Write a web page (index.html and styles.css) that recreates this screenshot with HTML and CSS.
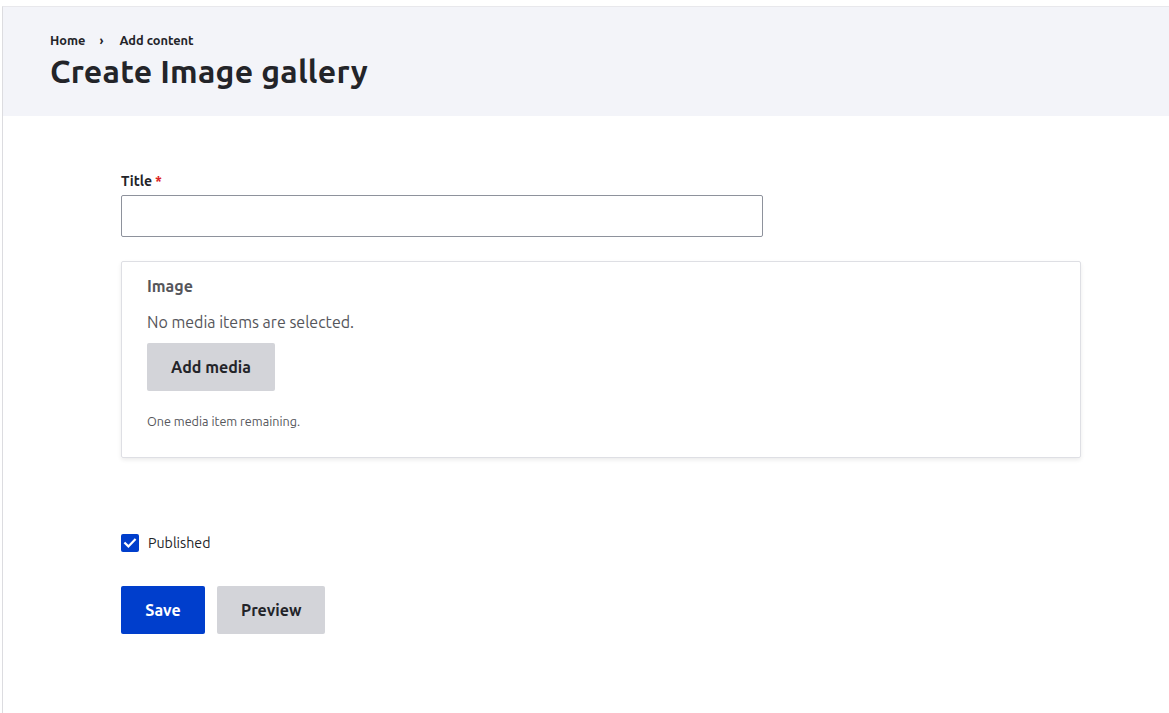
FILE: index.html
```html
<!DOCTYPE html>
<html lang="en">
<head>
<meta charset="utf-8">
<title>Create Image gallery</title>
<link rel="stylesheet" href="styles.css">
</head>
<body>
<div class="frame">
  <header class="page-header">
    <nav class="breadcrumb">
      <a href="#">Home</a>
      <span class="sep">›</span>
      <a href="#">Add content</a>
    </nav>
    <h1>Create Image gallery</h1>
  </header>
  <main class="content">
    <div class="field">
      <label class="label" for="title">Title<span class="req">*</span></label>
      <input id="title" class="text-input" type="text">
    </div>
    <fieldset class="media-box">
      <legend class="legend">Image</legend>
      <p class="empty">No media items are selected.</p>
      <button class="btn btn-grey btn-add" type="button">Add media</button>
      <p class="desc">One media item remaining.</p>
    </fieldset>
    <label class="check">
      <span class="box"><svg viewBox="0 0 18 18" width="18" height="18"><path d="M4.2 9.3 7.4 12.4 13.8 5.8" fill="none" stroke="#fff" stroke-width="2.2" stroke-linecap="square"/></svg></span>
      <span>Published</span>
    </label>
    <div class="actions">
      <button class="btn btn-blue" type="button">Save</button>
      <button class="btn btn-grey" type="button">Preview</button>
    </div>
  </main>
</div>
</body>
</html>
```
FILE: styles.css
```css
* { box-sizing: border-box; }
html, body { margin: 0; padding: 0; background: #fff; }
body {
  font-family: "Ubuntu", "Noto Sans", "Open Sans", sans-serif;
  color: #232429;
}
.frame {
  margin: 6px 0 0 2px;
  border-top: 1px solid #e8e8ec;
  border-left: 1px solid #dcdce0;
  min-height: 707px;
}
.page-header {
  background: #f3f4f9;
  height: 109px;
  padding: 24px 0 0 47px;
}
.breadcrumb {
  display: flex;
  align-items: center;
  font-size: 12.8px;
  font-weight: 700;
  line-height: 18px;
  height: 18px;
  padding-top: 0;
}
.breadcrumb a { color: #232429; text-decoration: none; }
.breadcrumb .sep { margin: 0 16px 0 14px; font-weight: 700; }
h1 {
  margin: 2px 0 0 0;
  font-size: 32px;
  line-height: 40px;
  font-weight: 700;
  letter-spacing: 0.25px;
}
.content { padding: 56px 0 0 118px; }
.field { display: flex; flex-direction: column; }
.label {
  font-size: 14px;
  font-weight: 700;
  line-height: 18px;
  margin-bottom: 5px;
}
.req { color: #dc2323; margin-left: 3px; }
.text-input {
  width: 642px;
  height: 42px;
  border: 1px solid #8e929c;
  border-radius: 2px;
  background: #fff;
  font: inherit;
}
.media-box {
  margin: 24px 0 0 0;
  width: 960px;
  border: 1px solid #dedfe4;
  border-radius: 2px;
  box-shadow: 0 2px 4px rgba(0,0,0,0.08);
  padding: 14px 25px 27px 25px;
  position: relative;
}
.legend {
  float: left;
  width: 100%;
  padding: 0;
  font-size: 16px;
  font-weight: 700;
  line-height: 20px;
  color: #55565b;
}
.empty {
  clear: both;
  margin: 0;
  padding-top: 16px;
  font-size: 16px;
  line-height: 20px;
  color: #55565b;
}
.btn {
  border: 0;
  border-radius: 2px;
  height: 48px;
  padding: 0 24px;
  font-family: inherit;
  font-size: 16px;
  font-weight: 700;
  cursor: pointer;
}
.btn-grey { background: #d3d4d9; color: #232429; }
.btn-blue { background: #003ecc; color: #fff; }
.btn-add { margin-top: 11px; width: 128px; display: block; }
.desc {
  margin: 22px 0 0 0;
  font-size: 12.6px;
  line-height: 17px;
  color: #55565b;
}
.check {
  display: flex;
  align-items: center;
  gap: 9px;
  margin-top: 76px;
  font-size: 14.2px;
  color: #232429;
}
.box {
  width: 18px; height: 18px;
  border-radius: 2px;
  background: #003ecc;
  display: flex;
}
.actions { display: flex; gap: 12px; margin-top: 34px; }
.actions .btn-blue { width: 84px; }
.actions .btn-grey { width: 108px; }
```
